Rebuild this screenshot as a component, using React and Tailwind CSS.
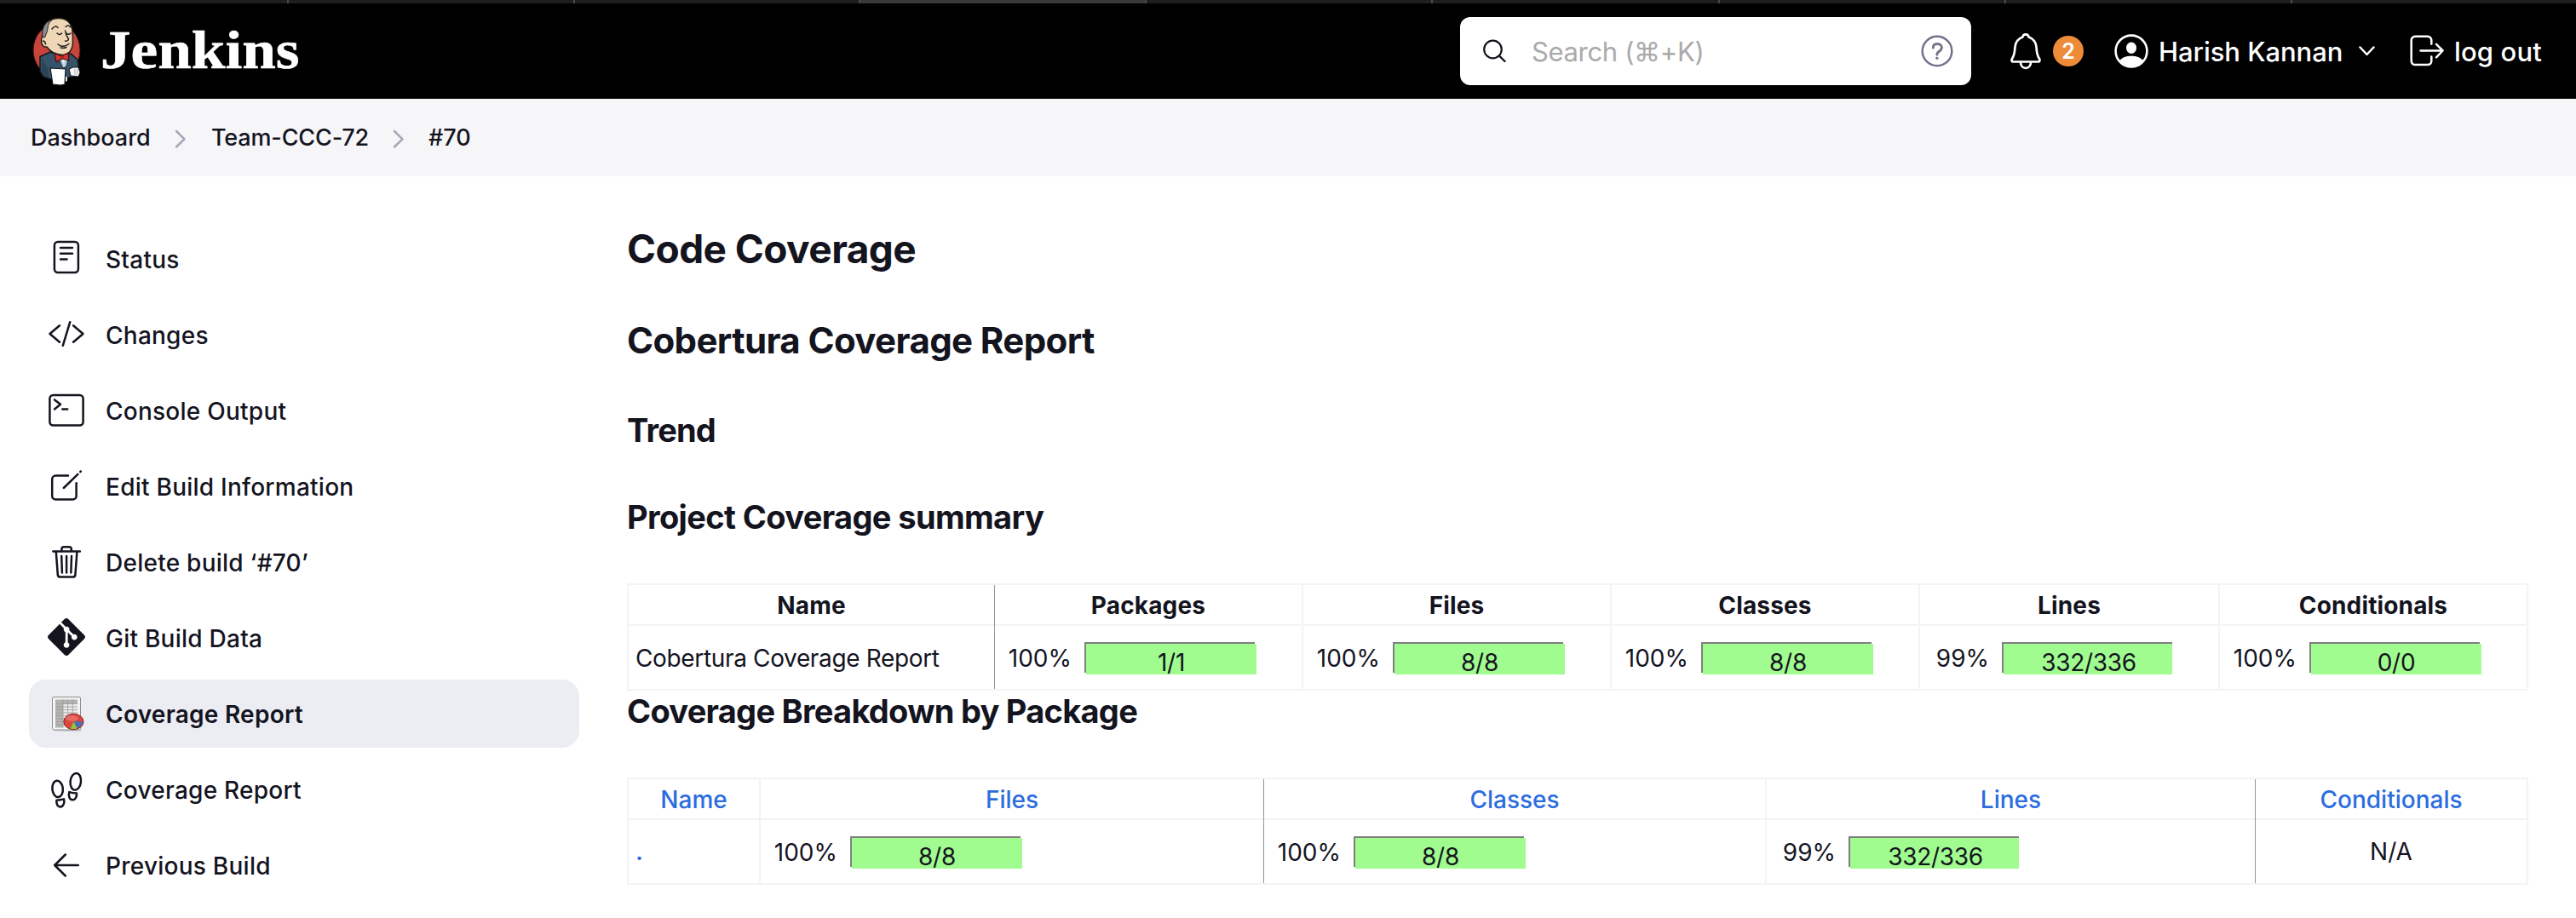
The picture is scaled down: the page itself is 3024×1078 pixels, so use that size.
import { SiGit } from "react-icons/si";

const stroke = {
  fill: "none",
  stroke: "currentColor",
  strokeWidth: 2.5,
  strokeLinecap: "round",
  strokeLinejoin: "round",
};

function Icon({ children }) {
  return (
    <svg className="h-11 w-11 shrink-0" viewBox="0 0 44 44" {...stroke}>
      {children}
    </svg>
  );
}

const StatusIcon = () => (
  <Icon>
    <rect x="7.9" y="1.9" width="28" height="36.2" rx="4" />
    <path d="M15 9h14M15 15.8h14M15 22.4h7.5" />
  </Icon>
);

const ChangesIcon = () => (
  <Icon>
    <path d="M14 11.3 2.5 21 14 30.8M30 11.3 41.5 21 30 30.8M26.2 7.2 17.8 34.8" />
  </Icon>
);

const ConsoleIcon = () => (
  <Icon>
    <rect x="2.4" y="3.9" width="39.2" height="35.6" rx="4" />
    <path d="m8 9.4 7 5.4-7 5.6M17.2 20.6h6" />
  </Icon>
);

const EditIcon = () => (
  <Icon>
    <path d="M24 9.6H9.2a4 4 0 0 0-4 4v19.8a4 4 0 0 0 4 4h20.4a4 4 0 0 0 4-4V18.2" />
    <path d="M18.8 24 35.4 7.8M38.3 5l.5-.5" />
  </Icon>
);

const TrashIcon = () => (
  <Icon>
    <path d="M6.3 9.6h31.6M16.4 9.4V6.8a2.6 2.6 0 0 1 2.6-2.6h6.2a2.6 2.6 0 0 1 2.6 2.6v2.6" />
    <path d="m9.8 10 2 26.8a3 3 0 0 0 3 2.8h14.6a3 3 0 0 0 3-2.8l2-26.8M16.2 15l.7 19.5M22.1 15v19.5M28 15l-.7 19.5" />
  </Icon>
);

const GitIcon = () => <SiGit className="h-11 w-11 shrink-0 -translate-y-px" />;

const GraphIcon = () => (
  <svg className="h-11 w-11 shrink-0" viewBox="0 0 44 44">
    <ellipse cx="24" cy="41.6" rx="17" ry="1.4" fill="#c9c9cf" />
    <rect x="5.5" y="2.5" width="33" height="38.5" rx="1.5" fill="#f4f4f2" stroke="#8f8f8f" />
    <rect x="9" y="5.5" width="26" height="33" fill="#ececec" />
    <path d="M9 5.5h26v5H9zM9 5.5h9v33H9z" fill="#b3b3b3" />
    <path
      d="M9 10.5h26M9 14h26M9 17.5h26M9 21h26M9 24.5h26M9 28h26M9 31.5h26M9 35h26M18 5.5v33M23.6 5.5v33M29.2 5.5v33"
      stroke="#9a9a9a"
      strokeWidth="0.8"
    />
    <ellipse cx="30.4" cy="31.5" rx="11.6" ry="9.2" fill="#d9453f" stroke="#8d1f1c" />
    <ellipse cx="28.5" cy="27.5" rx="7.5" ry="3.5" fill="#ec7b74" opacity="0.7" />
    <path d="M30.4 31.2h10.4a10.5 8.3 0 0 1-6 7.8z" fill="#4a6fb5" />
    <path d="m30.4 31.2 4 8.2a11 8.5 0 0 1-7.6 0z" fill="#86cc3c" />
  </svg>
);

const FeetIcon = () => (
  <Icon>
    <ellipse cx="11.6" cy="21.4" rx="6.2" ry="9.7" transform="rotate(-6 11.6 21.4)" />
    <path d="M10.4 34.7q4.5-.2 8.6-1.3c1.2 4.5-.8 8.9-4 9.1-3.2.2-5.2-3.2-4.6-7.8z" />
    <ellipse cx="32.8" cy="12.8" rx="6.2" ry="9.9" transform="rotate(7 32.8 12.8)" />
    <path d="M25.3 25.1q4.2 1.4 8.7 1.5c.4 4.3-1.8 7.9-4.8 7.7-3.4-.2-5.3-4.5-3.9-9.2z" />
  </Icon>
);

const ArrowIcon = () => (
  <Icon>
    <path d="M20.8 9.5 8.2 22l12.6 12.5M8.6 22h27.2" />
  </Icon>
);

const tasks = [
  { label: "Status", icon: StatusIcon },
  { label: "Changes", icon: ChangesIcon },
  { label: "Console Output", icon: ConsoleIcon },
  { label: "Edit Build Information", icon: EditIcon },
  { label: "Delete build ‘#70’", icon: TrashIcon },
  { label: "Git Build Data", icon: GitIcon },
  { label: "Coverage Report", icon: GraphIcon, active: true },
  { label: "Coverage Report", icon: FeetIcon },
  { label: "Previous Build", icon: ArrowIcon },
];

function Butler() {
  return (
    <svg className="h-[82px] w-[60px] shrink-0" viewBox="0 0 60 82">
      <ellipse cx="29.5" cy="40" rx="27.5" ry="31" fill="#c9453b" stroke="#3a1512" strokeWidth="1" />
      {/* jacket */}
      <path
        d="M10 47.5 22 42l12 4 12-2 8 7 2 14-8 6-12 2-10 2-12-4-4-6z"
        fill="#35536a"
        stroke="#14181c"
        strokeWidth="1.5"
      />
      <path d="M12 49l7 13 1 10-8-4z" fill="#2a4356" />
      {/* shirt */}
      <path d="m30 45 14 0-3 14-4 2z" fill="#b9d0e0" stroke="#14181c" strokeWidth="0.8" />
      <path d="m35 48 4 0-1 9z" fill="#f3f3f3" />
      {/* head */}
      <path
        d="M13 24C12 10 20 3 31 2.5 42 2 47.5 9 48 18c.4 4 .6 8 .4 13-.4 9-5 15-12.4 14.5C28 45 22 42 18 36c-4 1-7-3-6.5-8 .2-2 .6-3.5 1.5-4z"
        fill="#eed6b7"
        stroke="#231f1c"
        strokeWidth="1.5"
      />
      <path
        d="M13 24.5C11.5 14 16 6 24 4.5c-4 3-4.5 6-5 10-.5 3-1.5 6-3.5 10.5z"
        fill="#8b8d92"
        stroke="#231f1c"
        strokeWidth="1"
      />
      <path
        d="M24 15q4-5 7-1.5M40 12.5q3-3 6 .5M30 20q3 3 5.5 0M41 20q2.5 2.5 5 0M39.500 17q1 6 4 10-1 3-4 2M31 33q6 5 13-.5M34 37q4 1 7-.5M13.5 29q3 .5 3 4"
        fill="none"
        stroke="#231f1c"
        strokeWidth="1.5"
        strokeLinecap="round"
      />
      {/* bow tie */}
      <path
        d="m27 43.5 8 3.5 8-4 1 9-8-2-7 4z"
        fill="#d6352c"
        stroke="#3a1010"
        strokeWidth="1.2"
        strokeLinejoin="round"
      />
      <circle cx="36" cy="48" r="2" fill="#a9211b" />
      {/* glove and towel */}
      <path d="m44 62 5-2 6 0 2 6-2 5-9-1z" fill="#f4f4f4" stroke="#14181c" strokeWidth="1" />
      <path d="M51 62v7M54 62v6" stroke="#999" strokeWidth="0.8" />
      <path d="m22 61 18 1-1 18-5 1-9-1z" fill="#fff" stroke="#14181c" strokeWidth="1.2" />
      <path d="m40 71 2 0 0 5-2 1z" fill="#ddd" />
    </svg>
  );
}

const tabs = [337, 336, 335, 336, 336, 337, 336, 336, 335];

function BrowserEdge() {
  return (
    <div className="flex h-1 bg-[#1e1e1e]">
      {tabs.map((w, i) => (
        <div
          key={i}
          className={`shrink-0 border-l-2 ${i === 0 ? "border-transparent" : "border-[#4a4a4a]"} ${
            i === 3 ? "bg-[#383836]" : ""
          }`}
          style={{ width: w }}
        />
      ))}
    </div>
  );
}

function Header() {
  return (
    <header className="flex h-28 items-center bg-black pl-[37px] text-white">
      <Butler />
      <div className="ml-[21px] w-[1596px] pb-[3px]">
        <span className="inline-block origin-left scale-x-[1.13] font-['Liberation_Serif',serif] text-[63px] leading-[70px] font-bold [-webkit-text-stroke:0.6px_white]">
          Jenkins
        </span>
      </div>
      <div className="flex h-20 w-[600px] shrink-0 items-center rounded-xl bg-white pl-[26px] text-[#14141f]">
        <svg className="h-8 w-8 shrink-0" viewBox="0 0 32 32" {...stroke}>
          <circle cx="12.5" cy="14" r="10.3" strokeWidth="2.2" />
          <path d="m20 21.5 6.5 6.5" strokeWidth="2.4" />
        </svg>
        <span className="ml-[26px] flex-1 pt-px text-[31px] leading-10 tracking-[-0.35px] whitespace-nowrap text-[#aaaaaa]">
          Search (⌘+K)
        </span>
        <svg className="mr-5 h-10 w-10 text-[#73738c]" viewBox="0 0 40 40" {...stroke}>
          <circle cx="20" cy="20" r="17.3" />
          <path
            d="M15.3 16.2c0-3 1.9-4.7 4.9-4.7s5.2 1.7 5.2 4.3c0 2-1 3.2-2.9 4.4-1.8 1.1-2.6 1.9-2.6 3.7v.4"
            strokeWidth="2.9"
          />
          <circle cx="19.8" cy="28.3" r="1.2" fill="currentColor" strokeWidth="1" />
        </svg>
      </div>
      <svg className="ml-[45px] h-[44px] w-[38px] shrink-0" viewBox="0 0 38 44" {...stroke}>
        <path
          d="M19 2.3c-2 0-3.2 1.3-3.6 3.2C9.5 7.600 6.700 12 6.400 18c-.3 7-1.300 9.800-3.500 13.300-.9 1.500-.3 3.200 1.400 3.200h29.400c1.700 0 2.300-1.700 1.400-3.200-2.200-3.500-3.200-6.300-3.500-13.300-.3-6-3.100-10.400-9-12.500-.4-1.900-1.600-3.200-3.600-3.200z"
          strokeWidth="2.7"
        />
        <path d="M13 35c0 4 2.4 7 6 7s6-3 6-7" strokeWidth="2.7" />
      </svg>
      <span className="ml-[13px] flex h-9 w-9 shrink-0 items-center justify-center rounded-full bg-[#ee8b38] text-[25px] leading-none font-semibold">
        2
      </span>
      <svg className="ml-9 h-10 w-10 shrink-0" viewBox="0 0 40 40">
        <circle cx="20" cy="20" r="18.4" fill="none" stroke="white" strokeWidth="2.6" />
        <ellipse cx="20" cy="16.3" rx="6" ry="6.8" fill="white" />
        <path d="M6.5 31C9 27.5 14 25.8 20 25.8S31 27.5 33.5 31A18 18 0 0 1 20 37.8 18 18 0 0 1 6.5 31z" fill="white" />
      </svg>
      <span className="ml-[12px] w-[215px] pt-px text-[31px] leading-10 font-medium tracking-[-0.05px] whitespace-nowrap">
        Harish Kannan
      </span>
      <svg className="ml-[20px] h-5 w-5 shrink-0" viewBox="0 0 20 20" {...stroke}>
        <path d="m1.5 5.500 8 8.500 8-8.500" />
      </svg>
      <svg className="ml-10 h-[44px] w-[44px] shrink-0" viewBox="0 0 44 44" {...stroke}>
        <path d="M25.3 13.7V9.2a4.5 4.5 0 0 0-4.5-4.5H6.2a4.5 4.5 0 0 0-4.5 4.5v24.4a4.5 4.5 0 0 0 4.5 4.5h14.6a4.5 4.5 0 0 0 4.5-4.5v-5M31 13.8l7.6 7.7L31 29.3M12.5 21.5h25.6" />
      </svg>
      <span className="ml-[8px] pt-px text-[31px] leading-10 font-medium tracking-[0.15px] whitespace-nowrap">log out</span>
    </header>
  );
}

function Separator() {
  return (
    <svg className="h-6 w-4 shrink-0 text-[#a5a5b8]" viewBox="0 0 16 24" {...stroke}>
      <path d="m3 3 9.5 9.3L3 21.5" />
    </svg>
  );
}

function Breadcrumbs() {
  return (
    <nav className="flex h-[91px] items-center bg-[#f6f6f8] pt-[2px] pl-[36px] text-[27px] font-medium whitespace-nowrap">
      <span className="w-[143px]">Dashboard</span>
      <span className="ml-[25px] flex">
        <Separator />
      </span>
      <span className="ml-[28px] w-[187px] tracking-[-0.15px]">Team-CCC-72</span>
      <span className="ml-[25px] flex">
        <Separator />
      </span>
      <span className="ml-[27px]">#70</span>
    </nav>
  );
}

function Bar({ percent, ratio }) {
  const fill = percent === 99 ? "w-[198px]" : "w-[200px]";
  return (
    <div className="flex h-full">
      <span className="w-[90px] self-center pt-px text-right leading-10">{percent}%</span>
      <div className="mt-[19px] ml-[15px] h-9 w-[200px] bg-[#808080]">
        <div className="mt-0.5 ml-0.5 h-9 w-[200px]">
          <div className={`h-9 bg-[#a0fc8e] ${fill}`}>
            <div className="w-[200px] text-center leading-[44px] tracking-[-0.3px]">{ratio}</div>
          </div>
        </div>
      </div>
    </div>
  );
}

function Column({ title, className, head, children }) {
  return (
    <div className={`flex flex-col ${className}`}>
      <div className={`flex h-12 items-center justify-center border-b-2 border-b-[#f3f3f8] pt-px ${head}`}>{title}</div>
      <div className="h-[74px]">{children}</div>
    </div>
  );
}

const line = "border-r-2 border-r-[#f3f3f8]";
const dark = "border-r border-r-[#959599]";

function Summary() {
  const head = "font-bold tracking-[0.15px]";
  return (
    <div className="flex h-[126px] w-[2232px] border-2 border-[#f3f3f8] text-[28px]">
      <Column title="Name" className={`w-[430px] ${dark}`} head={head}>
        <div className="pl-[8px] leading-[76px] tracking-[-0.35px]">Cobertura Coverage Report</div>
      </Column>
      <Column title="Packages" className={`w-[362px] ${line}`} head={head}>
        <Bar percent={100} ratio="1/1" />
      </Column>
      <Column title="Files" className={`w-[362px] ${line}`} head={head}>
        <Bar percent={100} ratio="8/8" />
      </Column>
      <Column title="Classes" className={`w-[362px] ${line}`} head={head}>
        <Bar percent={100} ratio="8/8" />
      </Column>
      <Column title="Lines" className={`w-[352px] ${line}`} head={head}>
        <div className="-ml-[9px] h-full">
          <Bar percent={99} ratio="332/336" />
        </div>
      </Column>
      <Column title="Conditionals" className="w-[360px]" head={head}>
        <Bar percent={100} ratio="0/0" />
      </Column>
    </div>
  );
}

function Breakdown() {
  const head = "font-medium text-[#2b6de0]";
  return (
    <div className="flex h-[126px] w-[2232px] border-2 border-[#f3f3f8] text-[28px]">
      <Column title="Name" className={`w-[155px] ${line}`} head={head}>
        <div className="pl-[8px] leading-[75px] font-semibold text-[#2b6de0]">.</div>
      </Column>
      <Column title="Files" className={`w-[591px] ${dark}`} head={head}>
        <Bar percent={100} ratio="8/8" />
      </Column>
      <Column title="Classes" className={`w-[590px] ${line}`} head={head}>
        <Bar percent={100} ratio="8/8" />
      </Column>
      <Column title="Lines" className={`w-[574px] ${dark}`} head={head}>
        <div className="-ml-[9px] h-full">
          <Bar percent={99} ratio="332/336" />
        </div>
      </Column>
      <Column title="Conditionals" className="w-[318px]" head={head}>
        <div className="text-center leading-[75px]">N/A</div>
      </Column>
    </div>
  );
}

export default function App() {
  return (
    <div className="h-[1078px] w-[3024px] overflow-hidden bg-white font-['Inter',sans-serif] text-[#14141f]">
      <BrowserEdge />
      <Header />
      <Breadcrumbs />
      <div className="flex">
        <aside className="ml-[34px] flex w-[702px] shrink-0 flex-col gap-[9px] pt-[57px]">
          {tasks.map(({ label, icon: Glyph, active }, i) => (
            <a
              key={i}
              className={`flex h-20 w-[646px] items-center gap-[24px] rounded-[20px] pl-[22px] text-[28px] leading-10 tracking-[0.25px] whitespace-nowrap ${
                active ? "bg-[#ecedf3] font-semibold" : "font-medium"
              }`}
            >
              <Glyph />
              <span className="pt-px">{label}</span>
            </a>
          ))}
        </aside>
        <main className="w-[2232px] pt-[55px] font-normal">
          <h1 className="h-[107px] text-[46px] leading-[60px] font-bold tracking-[-0.55px]">Code Coverage</h1>
          <h2 className="h-[106px] text-[42px] leading-[61px] font-bold tracking-[-0.62px]">
            Cobertura Coverage Report
          </h2>
          <h3 className="h-[102px] text-[38px] leading-[60px] font-bold tracking-[-0.8px]">Trend</h3>
          <h3 className="h-[108px] text-[38px] leading-[60px] font-bold tracking-[-0.62px]">
            Project Coverage summary
          </h3>
          <Summary />
          <h3 className="h-[102px] text-[38px] leading-[48px] font-bold tracking-[-0.73px]">
            Coverage Breakdown by Package
          </h3>
          <Breakdown />
        </main>
      </div>
    </div>
  );
}
